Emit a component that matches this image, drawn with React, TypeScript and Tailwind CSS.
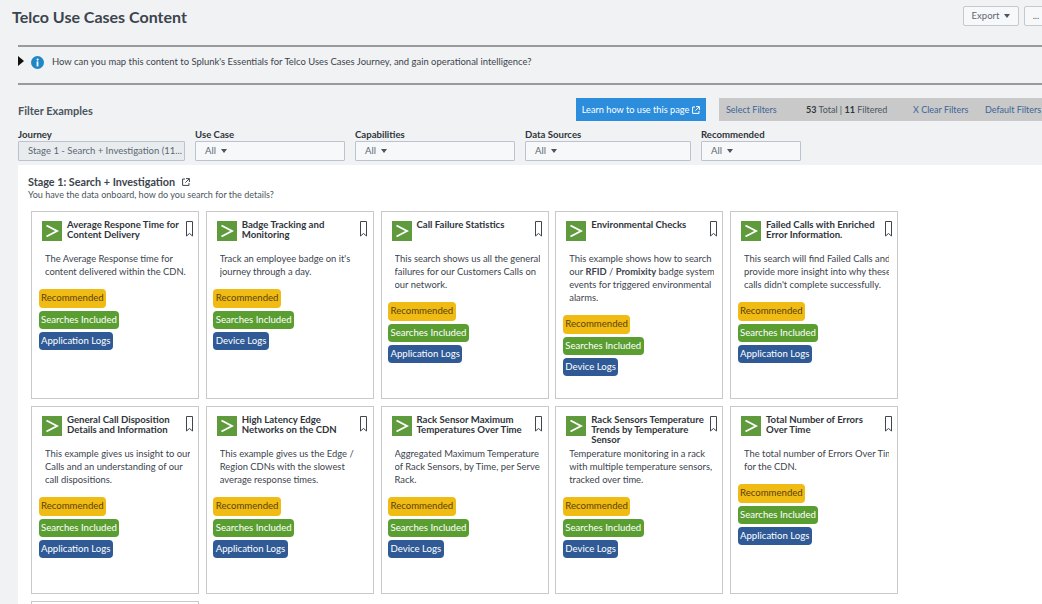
import React from "react";

type Tag = { label: string; tone: "yellow" | "green" | "blue" };

interface CardData {
  title: string;
  desc: React.ReactNode;
  source: string;
}

const rowOne: CardData[] = [
  {
    title: "Average Respone Time for Content Delivery",
    desc: "The Average Response time for content delivered within the CDN.",
    source: "Application Logs",
  },
  {
    title: "Badge Tracking and Monitoring",
    desc: "Track an employee badge on it's journey through a day.",
    source: "Device Logs",
  },
  {
    title: "Call Failure Statistics",
    desc: "This search shows us all the general failures for our Customers Calls on our network.",
    source: "Application Logs",
  },
  {
    title: "Environmental Checks",
    desc: (
      <>
        This example shows how to search our <b>RFID</b> / <b>Promixity</b> badge system events for triggered environmental alarms.
      </>
    ),
    source: "Device Logs",
  },
  {
    title: "Failed Calls with Enriched Error Information.",
    desc: "This search will find Failed Calls and provide more insight into why these calls didn't complete successfully.",
    source: "Application Logs",
  },
];

const rowTwo: CardData[] = [
  {
    title: "General Call Disposition Details and Information",
    desc: (
      <>
        This example gives us insight to our Calls and an understanding of our
        <br />
        call dispositions.
      </>
    ),
    source: "Application Logs",
  },
  {
    title: "High Latency Edge Networks on the CDN",
    desc: "This example gives us the Edge / Region CDNs with the slowest average response times.",
    source: "Application Logs",
  },
  {
    title: "Rack Sensor Maximum Temperatures Over Time",
    desc: "Aggregated Maximum Temperature of Rack Sensors, by Time, per Server Rack.",
    source: "Device Logs",
  },
  {
    title: "Rack Sensors Temperature Trends by Temperature Sensor",
    desc: "Temperature monitoring in a rack with multiple temperature sensors, tracked over time.",
    source: "Device Logs",
  },
  {
    title: "Total Number of Errors Over Time",
    desc: "The total number of Errors Over Time for the CDN.",
    source: "Application Logs",
  },
];

const Caret = () => (
  <svg width="6" height="4" viewBox="0 0 6 4" className="shrink-0">
    <path d="M0 0h6L3 4z" fill="#4b5560" />
  </svg>
);

const ExternalIcon = ({ color }: { color: string }) => (
  <svg width="8" height="8" viewBox="0 0 8 8" fill="none" stroke={color} strokeWidth="1">
    <path d="M3 1H.6v6.4H7V5" />
    <path d="M4 .6h3.4V4M7.2.8 3.4 4.6" />
  </svg>
);

const Badge = ({ label, tone }: Tag) => {
  const toneClass =
    tone === "yellow"
      ? "bg-[#f0bb12] text-[#5c4210] h-[19px]"
      : tone === "green"
        ? "bg-[#5a9e32] text-white h-[18px]"
        : "bg-[#2f5a96] text-white h-[18px]";
  return (
    <span className={`inline-flex w-fit items-center rounded-[4px] px-[2.5px] text-[9.6px] ${toneClass}`}>
      {label}
    </span>
  );
};

const UseCaseCard = ({ card }: { card: CardData }) => (
  <div className="h-[188px] w-[168px] shrink-0 border border-[#c9c9c9] bg-white pl-[6.5px] pt-[9px]">
    <div className="flex h-[31px] pl-[3.5px]">
      <div className="flex h-[20px] w-[20px] shrink-0 items-center justify-center bg-[#5f9a3c]">
        <svg width="14" height="14" viewBox="0 0 14 14" fill="none" stroke="white" strokeWidth="1.9">
          <path d="M1.5 1.5 12 7 1.5 12.5" />
        </svg>
      </div>
      <div className="-mt-[1px] ml-[5px] w-[116px] text-[9.6px] font-bold leading-[10px] text-[#2f353b]">{card.title}</div>
      <svg width="7" height="16" viewBox="0 0 7 16" fill="none" stroke="#3f464d" strokeWidth="1" className="ml-[2.5px] shrink-0">
        <path d="M.5.5h6v14.5L3.5 12.5.5 15z" />
      </svg>
    </div>
    <div className="ml-[6.5px] w-[145px] overflow-hidden">
      <div className="w-[154px] text-[9.4px] leading-[13px] text-[#3c444d]">{card.desc}</div>
    </div>
    <div className="mt-[11px] flex flex-col gap-[3px]">
      <Badge label="Recommended" tone="yellow" />
      <Badge label="Searches Included" tone="green" />
      <Badge label={card.source} tone="blue" />
    </div>
  </div>
);

const FilterSelect = ({ label, width, value }: { label: string; width: string; value?: string }) => (
  <div className={`flex flex-col ${width}`}>
    <span className="h-[12px] text-[9.6px] font-bold leading-[12px] text-[#2f353b]">{label}</span>
    <div
      className={`flex h-[20px] items-center gap-[5px] whitespace-nowrap rounded-[1px] border border-[#bcc3cf] px-[9px] text-[9.5px] text-[#5c6773] ${
        value ? "bg-[#e9ecee]" : "bg-[#f7f8fa]"
      }`}
    >
      {value ?? (
        <>
          All <Caret />
        </>
      )}
    </div>
  </div>
);

export default function App() {
  return (
    <div className="h-[604px] w-[1042px] overflow-hidden bg-[#f1f2f4] font-['Lato',sans-serif]">
      {/* Title row */}
      <div className="flex h-[45px] items-start justify-between pt-[5px] pl-[12px]">
        <h1 className="text-[16px] font-bold leading-[24px] text-[#3c444d]">Telco Use Cases Content</h1>
        <div className="mt-[1px] flex w-[79px] shrink-0 gap-[5px] overflow-hidden">
          <button className="flex h-[20px] w-[56px] shrink-0 items-center justify-center gap-[5px] rounded-[2px] border border-[#c4cad2] bg-[#f7f8fa] text-[9.5px] text-[#5c6773]">
            Export <Caret />
          </button>
          <button className="h-[20px] w-[24px] shrink-0 rounded-[2px] border border-[#c4cad2] bg-[#f7f8fa] text-[9.5px] text-[#5c6773]">
            ...
          </button>
        </div>
      </div>

      <div className="pl-[18px]">
        {/* Info strip */}
        <div className="flex h-[40px] items-center gap-[7px] border-y-2 border-[#9a9a9a] pb-[6px]">
          <svg width="6" height="10" viewBox="0 0 6 10" className="mb-[3px] shrink-0">
            <path d="M0 0l6 5-6 5z" fill="#111" />
          </svg>
          <svg width="13" height="13" viewBox="0 0 13 13" className="shrink-0">
            <circle cx="6.5" cy="6.5" r="6.5" fill="#1f87c5" />
            <rect x="5.6" y="5.4" width="1.8" height="5" fill="white" />
            <circle cx="6.6" cy="3.6" r="1.1" fill="white" />
          </svg>
          <span className="ml-[1px] text-[9.45px] text-[#3c444d]">
            How can you map this content to Splunk's Essentials for Telco Uses Cases Journey, and gain operational intelligence?
          </span>
        </div>

        {/* Filter header */}
        <div className="mt-[13px] flex h-[23px] items-center">
          <span className="mt-[3px] w-[558px] shrink-0 text-[11px] font-bold text-[#4b5560]">Filter Examples</span>
          <button className="flex h-[23px] w-[130px] shrink-0 items-center justify-center gap-[3px] bg-[#2b8ddb] text-[9.2px] text-white">
            Learn how to use this page <ExternalIcon color="white" />
          </button>
          <div className="ml-[13px] flex h-[23px] flex-1 items-center whitespace-nowrap bg-[#c9c9c9] pl-[7px] text-[9px] text-[#3d6597]">
            <span className="w-[80px]">Select Filters</span>
            <span className="w-[107px] text-[#4b5560]">
              <b className="text-[#2f353b]">53</b> Total | <b className="text-[#2f353b]">11</b> Filtered
            </span>
            <span className="w-[72px]">X Clear Filters</span>
            <span>Default Filters</span>
          </div>
        </div>

        {/* Filters */}
        <div className="mt-[8px] flex h-[36px] items-start gap-[10px]">
          <FilterSelect label="Journey" width="w-[167px]" value="Stage 1 - Search + Investigation (11..." />
          <FilterSelect label="Use Case" width="w-[150px]" />
          <FilterSelect label="Capabilities" width="w-[160px]" />
          <FilterSelect label="Data Sources" width="w-[166px]" />
          <FilterSelect label="Recommended" width="w-[100px]" />
        </div>

        {/* Stage panel */}
        <div className="h-[500px] bg-white pl-[10px] pt-[10px]">
          <div className="flex items-center gap-[7px] text-[10.8px] font-bold leading-[13px] text-[#3c444d]">
            Stage 1: Search + Investigation <ExternalIcon color="#3c444d" />
          </div>
          <div className="text-[9.05px] leading-[13px] text-[#4b5560]">You have the data onboard, how do you search for the details?</div>
          <div className="mt-[10px] ml-[3px] flex flex-col gap-[7px]">
            <div className="flex gap-[6.75px]">
              {rowOne.map((card) => (
                <UseCaseCard key={card.title} card={card} />
              ))}
            </div>
            <div className="flex gap-[6.75px]">
              {rowTwo.map((card) => (
                <UseCaseCard key={card.title} card={card} />
              ))}
            </div>
            <div className="h-[188px] w-[168px] border border-[#c9c9c9] bg-white" />
          </div>
        </div>
      </div>
    </div>
  );
}
